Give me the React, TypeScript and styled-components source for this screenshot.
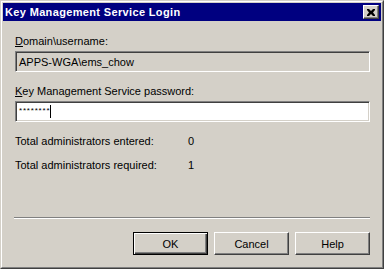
import styled, { createGlobalStyle } from "styled-components";

const GlobalStyle = createGlobalStyle`
  html, body {
    margin: 0;
    padding: 0;
    background: #d4d0c8;
  }
  body {
    font-family: "Liberation Sans", Arial, sans-serif;
    font-size: 11px;
    color: #000;
  }
`;

const Window = styled.div`
  width: 384px;
  height: 269px;
  box-sizing: border-box;
  background: #d4d0c8;
  border: 1px solid;
  border-color: #d4d0c8 #404040 #404040 #d4d0c8;
`;

const Frame = styled.div`
  height: 100%;
  box-sizing: border-box;
  border: 1px solid;
  border-color: #ffffff #808080 #808080 #ffffff;
  padding: 1px;
  display: flex;
  flex-direction: column;
`;

const TitleBar = styled.div`
  height: 18px;
  background: #000080;
  display: flex;
  align-items: center;
  justify-content: space-between;
  padding: 0 2px 0 2px;
`;

const Title = styled.span`
  color: #fff;
  font-weight: bold;
  font-size: 11px;
  letter-spacing: 0.35px;
`;

const CloseButton = styled.div`
  width: 16px;
  height: 14px;
  box-sizing: border-box;
  background: #d4d0c8;
  border: 1px solid;
  border-color: #ffffff #404040 #404040 #ffffff;
  box-shadow: inset -1px -1px 0 #808080;
  display: flex;
  align-items: center;
  justify-content: center;
`;

const Content = styled.div`
  flex: 1;
  display: flex;
  flex-direction: column;
  padding: 14px 11px 0 12px;
`;

const Label = styled.div`
  line-height: 13px;
  height: 13px;
  margin-bottom: 3px;
  white-space: nowrap;
  u {
    text-decoration: underline;
  }
`;

const Field = styled.div<{ $disabled?: boolean }>`
  height: 21px;
  box-sizing: border-box;
  border: 1px solid;
  border-color: #808080 #ffffff #ffffff #808080;
  box-shadow: inset 1px 1px 0 #404040, inset -1px -1px 0 #d4d0c8;
  background: ${(p) => (p.$disabled ? "#d4d0c8" : "#ffffff")};
  display: flex;
  align-items: center;
  padding-left: 3px;
  margin-bottom: 13px;
  white-space: nowrap;
`;

const Mask = styled.span`
  font-size: 8px;
  letter-spacing: 0.8px;
  line-height: 1;
  position: relative;
  top: -1px;
`;

const Caret = styled.span`
  display: inline-block;
  width: 1px;
  height: 13px;
  background: #000;
`;

const StatRow = styled.div`
  display: flex;
  line-height: 13px;
  height: 13px;
  margin-bottom: 11px;
`;

const StatLabel = styled.span`
  width: 173px;
`;

const Separator = styled.div`
  margin-top: 34px;
  border-top: 1px solid #808080;
  border-bottom: 1px solid #ffffff;
  margin-left: -1px;
`;

const Buttons = styled.div`
  display: flex;
  justify-content: flex-end;
  gap: 6px;
  margin-top: 13px;
`;

const Button = styled.div<{ $default?: boolean }>`
  width: 75px;
  height: 23px;
  box-sizing: border-box;
  background: #d4d0c8;
  display: flex;
  align-items: center;
  justify-content: center;
  border: 1px solid;
  border-color: ${(p) =>
    p.$default ? "#000" : "#ffffff #404040 #404040 #ffffff"};
  box-shadow: ${(p) =>
    p.$default
      ? "inset 1px 1px 0 #ffffff, inset -1px -1px 0 #404040, inset -2px -2px 0 #808080"
      : "inset -1px -1px 0 #808080"};
`;

export default function App() {
  return (
    <>
      <GlobalStyle />
      <Window>
        <Frame>
          <TitleBar>
            <Title>Key Management Service Login</Title>
            <CloseButton>
              <svg width="8" height="7" viewBox="0 0 8 7">
                <path
                  d="M0 0h2l2 2 2-2h2v1L6 3.5 8 6v1H6L4 5 2 7H0V6l2-2.5L0 1z"
                  fill="#000"
                />
              </svg>
            </CloseButton>
          </TitleBar>
          <Content>
            <Label>
              <u>D</u>omain\username:
            </Label>
            <Field $disabled>APPS-WGA\ems_chow</Field>
            <Label>
              <u>K</u>ey Management Service password:
            </Label>
            <Field>
              <Mask>********</Mask>
              <Caret />
            </Field>
            <StatRow>
              <StatLabel>Total administrators entered:</StatLabel>
              <span>0</span>
            </StatRow>
            <StatRow>
              <StatLabel>Total administrators required:</StatLabel>
              <span>1</span>
            </StatRow>
            <Separator />
            <Buttons>
              <Button $default>OK</Button>
              <Button>Cancel</Button>
              <Button>Help</Button>
            </Buttons>
          </Content>
        </Frame>
      </Window>
    </>
  );
}
